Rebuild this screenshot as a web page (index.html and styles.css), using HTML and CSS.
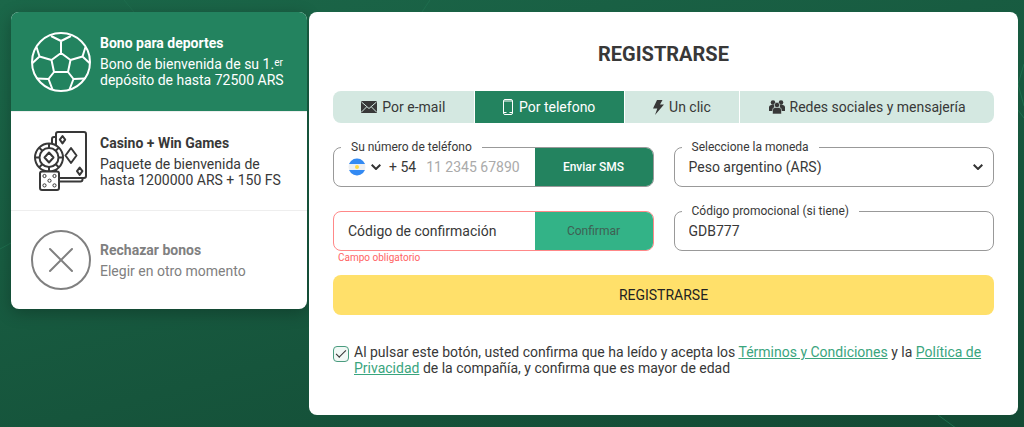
FILE: index.html
```html
<!DOCTYPE html>
<html lang="es">
<head>
<meta charset="utf-8">
<meta name="viewport" content="width=device-width, initial-scale=1">
<title>Registrarse</title>
<link rel="stylesheet" href="styles.css">
</head>
<body>
<svg class="backdrop" viewBox="0 0 1024 427" preserveAspectRatio="none" aria-hidden="true">
  <path d="M0 249L11 243M124 0l10 12M1024 64l-6 20 6 22M938 415l22 16M430 0l-8 12M1018 110l6 8"/>
</svg>
<main class="layout">
  <nav class="bonuses" aria-label="Bonos">
    <button class="bonus bonus-active" type="button">
      <svg class="bonus-icon" viewBox="0 0 60 60" aria-hidden="true">
        <circle cx="30" cy="30" r="29"/>
        <path d="M30 21l9.500 7L37 40H23l-2.500-12zM30 21V9M20 4l10 5 10-5M20.500 28L8.500 24.500M5.500 15l3 9.500L1.500 31M39.500 28l12-3.500M54.500 15l-3 9.500 7 6.500M23 40l-5.500 7M6 46.500l11.500.5L21.500 57.500M37 40l5.500 7M54 46.500l-11.500.5-4 10.500"/>
      </svg>
      <span class="bonus-body">
        <strong class="bonus-title">Bono para deportes</strong>
        <span class="bonus-text">Bono de bienvenida de su 1.<sup>er</sup> depósito de hasta 72500 ARS</span>
      </span>
    </button>
    <button class="bonus" type="button">
      <svg class="bonus-icon" viewBox="6 6 60 60" aria-hidden="true">
        <rect x="31" y="7" width="30" height="46" rx="2"/>
        <path d="M31 12h-2q-2 0-2 2v4M57.500 53v1.500q0 2-2 2H35"/>
        <path d="M37.500 11l2.700 3.700-2.700 3.700-2.700-3.700zM46 23l5.500 7.500L46 38l-5.500-7.500zM54.700 42.500l2.700 3.700-2.700 3.700-2.700-3.700z"/>
        <circle class="icon-fill" cx="24" cy="32.500" r="14"/>
        <circle cx="24" cy="32.500" r="9.500"/>
        <path d="M24 27.500l4.500 5-4.500 5-4.500-5zM24 18.500V23M24 42v4.500M10 32.500h4.500M33.500 32.500H38M14 22.500l3.300 3.300M30.700 39.200l3.300 3.300M34 22.500l-3.300 3.300M17.300 39.200L14 42.500"/>
        <rect class="icon-fill" x="15" y="46.500" width="19" height="18.500" rx="2"/>
        <g class="icon-pips"><circle cx="19.500" cy="51" r="1.600"/><circle cx="29.500" cy="51" r="1.600"/><circle cx="24.500" cy="55.700" r="1.600"/><circle cx="19.500" cy="60.400" r="1.600"/><circle cx="29.500" cy="60.400" r="1.600"/></g>
      </svg>
      <span class="bonus-body">
        <strong class="bonus-title">Casino + Win Games</strong>
        <span class="bonus-text">Paquete de bienvenida de hasta 1200000 ARS + 150 FS</span>
      </span>
    </button>
    <button class="bonus bonus-muted" type="button">
      <svg class="bonus-icon" viewBox="0 0 60 60" aria-hidden="true">
        <circle cx="30" cy="30" r="29"/>
        <path d="M19 19l22 22M41 19L19 41" stroke-linecap="round"/>
      </svg>
      <span class="bonus-body">
        <strong class="bonus-title">Rechazar bonos</strong>
        <span class="bonus-text">Elegir en otro momento</span>
      </span>
    </button>
  </nav>

  <form class="panel">
    <h1 class="panel-title">REGISTRARSE</h1>
    <div class="tabs" role="tablist">
      <button class="tab" type="button" role="tab">
        <svg width="16" height="12" viewBox="0 0 16 12" aria-hidden="true"><rect width="16" height="12" rx="1" fill="currentColor"/><path d="M.5 1L8 7.500 15.500 1M.5 11l5-5M15.500 11l-5-5" fill="none" stroke="#d4e8e1"/></svg>
        Por e-mail
      </button>
      <button class="tab tab-active" type="button" role="tab" aria-selected="true">
        <svg width="11" height="16" viewBox="0 0 11 16" fill="none" stroke="currentColor" aria-hidden="true"><rect x=".5" y=".5" width="9" height="15" rx="1.500"/><path d="M1 13.500h2.500M6.500 13.500H9M1 2h8"/></svg>
        Por telefono
      </button>
      <button class="tab" type="button" role="tab">
        <svg width="11" height="15" viewBox="0 0 11 15" fill="currentColor" aria-hidden="true"><path d="M4 0h5.500L7 4.500h4L2 15l2.300-6.500H0z"/></svg>
        Un clic
      </button>
      <button class="tab" type="button" role="tab">
        <svg width="16" height="14" viewBox="0 0 16 14" fill="currentColor" aria-hidden="true"><circle cx="4" cy="2.600" r="2.300"/><circle cx="12" cy="2.600" r="2.300"/><path d="M0 11V7.500Q0 5 2.500 5H5v6zM16 11V7.500Q16 5 13.500 5H11v6z"/><path d="M3.500 14v-4q0-2.500 2.500-2.500h4q2.500 0 2.500 2.500v4z" stroke="#d4e8e1" stroke-width=".6"/><circle cx="8" cy="5" r="2.700" stroke="#d4e8e1" stroke-width=".6"/></svg>
        Redes sociales y mensajería
      </button>
    </div>

    <div class="fields">
      <div class="field">
        <label class="field-label" for="phone">Su número de teléfono</label>
        <button class="country" type="button" aria-label="País: Argentina">
          <svg width="18" height="18" viewBox="0 0 18 18" aria-hidden="true"><clipPath id="flag"><circle cx="9" cy="9" r="8.500"/></clipPath><g clip-path="url(#flag)"><path fill="#eef0f2" d="M0 0h18v18H0z"/><path fill="#338af3" d="M0 0h18v6H0zM0 12h18v6H0z"/></g><circle cx="9" cy="9" r="2" fill="#ffda44"/></svg>
          <svg class="chevron" width="10" height="6" viewBox="0 0 10 6" aria-hidden="true"><path d="M.7.7L5 5 9.300.7"/></svg>
        </button>
        <span class="prefix">+ 54</span>
        <input class="input phone-input" id="phone" type="tel" placeholder="11 2345 67890">
        <button class="field-button" type="button">Enviar SMS</button>
      </div>

      <div class="field">
        <label class="field-label" for="currency">Seleccione la moneda</label>
        <select class="input" id="currency"><option>Peso argentino (ARS)</option></select>
        <svg class="chevron select-chevron" width="10" height="6" viewBox="0 0 10 6" aria-hidden="true"><path d="M.7.7L5 5 9.300.7"/></svg>
      </div>

      <div class="field field-invalid">
        <input class="input" id="code" type="text" placeholder="Código de confirmación" aria-label="Código de confirmación" aria-describedby="code-error">
        <button class="field-button field-button-off" type="button">Confirmar</button>
        <span class="field-error" id="code-error">Campo obligatorio</span>
      </div>

      <div class="field">
        <label class="field-label" for="promo">Código promocional (si tiene)</label>
        <input class="input" id="promo" type="text" value="GDB777">
      </div>
    </div>

    <button class="submit" type="button">REGISTRARSE</button>

    <div class="terms">
      <input class="terms-check" id="terms" type="checkbox" checked>
      <label for="terms">Al pulsar este botón, usted confirma que ha leído y acepta los <a href="#">Términos y Condiciones</a> y la <a href="#">Política de Privacidad</a> de la compañía, y confirma que es mayor de edad</label>
    </div>
  </form>
</main>
</body>
</html>
```

FILE: styles.css
```css
* {
  box-sizing: border-box;
}

body {
  margin: 0;
  min-height: 100vh;
  background: linear-gradient(165deg, #1b6749, #134a34);
  color: #383838;
  font-family: Roboto, "Liberation Sans", sans-serif;
  font-size: 14px;
  line-height: 16px;
}

button,
input,
select {
  margin: 0;
  padding: 0;
  border: 0;
  background: none;
  color: inherit;
  font: inherit;
}

.backdrop {
  position: absolute;
  inset: 0;
  z-index: -1;
  width: 100%;
  height: 100%;
  fill: none;
  stroke: #1f6e4e;
}

.layout {
  display: flex;
  align-items: flex-start;
  gap: 2px;
  padding: 12px 6px 12px 11px;
}

/* Bonus list */
.bonuses {
  flex: 0 0 296px;
  overflow: hidden;
  border-radius: 8px;
  background: #fff;
  box-shadow: 0 4px 16px rgba(0, 0, 0, 0.25);
}

.bonus {
  display: flex;
  align-items: center;
  gap: 9px;
  width: 100%;
  min-height: 99px;
  padding: 0 20px;
  text-align: left;
}

.bonus + .bonus {
  border-top: 1px solid #eee;
}

.bonus-active {
  background: #23835f;
  color: #fff;
}

.bonus-muted {
  color: #808080;
}

.bonus-icon {
  flex: none;
  width: 60px;
  height: 60px;
  fill: none;
  stroke: currentColor;
  stroke-width: 2;
  stroke-linejoin: round;
}

.icon-fill {
  fill: #fff;
}

.icon-pips {
  stroke-width: 1;
}

.bonus-body {
  display: grid;
  gap: 5px;
}

.bonus-title {
  font-weight: 700;
}

.bonus-text sup {
  font-size: 10px;
  line-height: 0;
  vertical-align: 3px;
}

/* Registration panel */
.panel {
  flex: 1;
  min-width: 0;
  padding: 30px 24px 39px;
  border-radius: 8px;
  background: #fff;
}

.panel-title {
  margin: 0;
  font-size: 20px;
  font-weight: 700;
  line-height: 24px;
  text-align: center;
}

.tabs {
  display: flex;
  gap: 1px;
  margin-top: 25px;
  overflow: hidden;
  border-radius: 8px;
}

.tab {
  display: flex;
  flex: 1 0 auto;
  align-items: center;
  justify-content: center;
  gap: 5px;
  height: 32px;
  background: #d4e8e1;
}

.tab-active {
  background: #23835f;
  color: #fff;
}

.fields {
  display: grid;
  grid-template-columns: repeat(2, minmax(0, 1fr));
  gap: 24px 20px;
  margin-top: 24px;
}

.field {
  position: relative;
  display: flex;
  align-items: center;
  height: 40px;
  border: 1px solid #999;
  border-radius: 8px;
}

.field-label {
  position: absolute;
  top: -9px;
  left: 7px;
  padding: 0 10px;
  background: #fff;
  font-size: 12px;
}

.input {
  flex: 1;
  align-self: stretch;
  min-width: 0;
  padding: 0 14px;
  outline: 0;
  appearance: none;
}

.input::placeholder {
  color: #383838;
  opacity: 1;
}

.country {
  display: flex;
  align-items: center;
  gap: 5px;
  padding-left: 14px;
}

.chevron {
  fill: none;
  stroke: #333;
  stroke-width: 2;
}

.select-chevron {
  position: absolute;
  right: 10px;
  pointer-events: none;
}

.prefix {
  padding-left: 8px;
}

.phone-input {
  padding: 0 0 0 10px;
}

.phone-input::placeholder {
  color: #aaa;
}

.field-button {
  flex: 0 0 118px;
  align-self: stretch;
  border-radius: 0 7px 7px 0;
  background: #23835f;
  color: #fff;
  font-size: 12px;
  font-weight: 500;
}

.field-button-off {
  background: #33b387;
  color: #3f6053;
  font-weight: 400;
}

.field-invalid {
  border-color: #f88;
}

.field-error {
  position: absolute;
  top: 100%;
  left: 4px;
  color: #ff6464;
  font-size: 10px;
}

.submit {
  width: 100%;
  height: 40px;
  margin-top: 24px;
  border-radius: 8px;
  background: #ffe06a;
  color: #222;
}

.terms {
  display: flex;
  align-items: flex-start;
  gap: 5px;
  margin-top: 29px;
}

.terms-check {
  display: grid;
  flex: none;
  place-items: center;
  width: 16px;
  height: 16px;
  margin-top: 2px;
  border: 1px solid #4a9c7f;
  border-radius: 4px;
  background: #f1f8f5;
  appearance: none;
}

.terms-check:checked::after {
  width: 9px;
  height: 4px;
  margin-bottom: 3px;
  border: solid #333;
  border-width: 0 0 1px 1px;
  content: "";
  transform: rotate(-45deg);
}

.terms a {
  color: #3aa57e;
}
```
